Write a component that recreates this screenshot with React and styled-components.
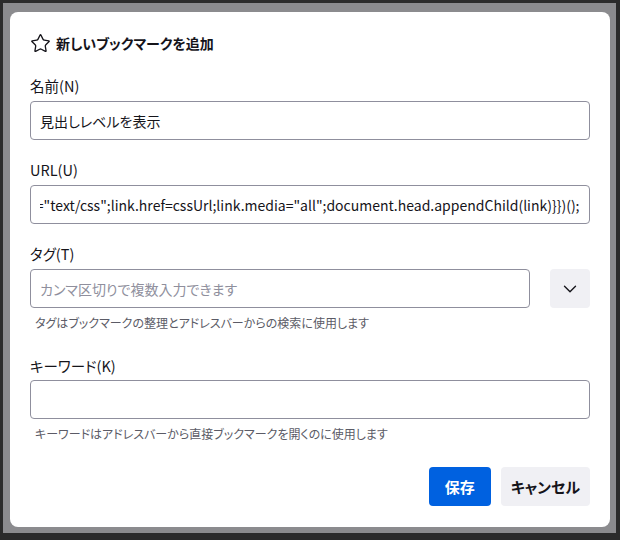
import React, { useLayoutEffect, useRef } from "react";
import styled, { createGlobalStyle } from "styled-components";
import { Star, ChevronDown } from "lucide-react";

const GlobalStyle = createGlobalStyle`
  html, body {
    margin: 0;
    padding: 0;
    background: #2b2b2b;
  }
  body {
    font-family: "Noto Sans CJK JP", "Noto Sans", sans-serif;
    font-feature-settings: "palt";
    color: #15141a;
  }
  input, button {
    font-feature-settings: "palt";
  }
`;

const Screen = styled.div`
  width: 620px;
  height: 540px;
  padding: 3px 4px 7px 3px;
  box-sizing: border-box;
`;

const Backdrop = styled.div`
  height: 100%;
  background: #8b8b8e;
  padding: 9px 6px 6px 7px;
  box-sizing: border-box;
`;

const Dialog = styled.div`
  height: 100%;
  background: #ffffff;
  border-radius: 8px;
  padding: 19px 20px 20px 20px;
  box-sizing: border-box;
  display: flex;
  flex-direction: column;
`;

const TitleRow = styled.div`
  display: flex;
  align-items: center;
  gap: 5px;
  height: 24px;
  font-size: 14px;
  font-weight: 700;
`;

const Field = styled.div`
  display: flex;
  flex-direction: column;
  margin-top: ${(p) => p.$top}px;
`;

const Label = styled.label`
  font-size: 14.5px;
  line-height: 20px;
  height: 20px;
  margin-bottom: ${(p) => p.$gap || 5}px;
`;

const TextInput = styled.input`
  height: 39px;
  box-sizing: border-box;
  border: 1px solid #8f8f9d;
  border-radius: 4px;
  padding: 0 9px;
  font-family: inherit;
  font-size: 14px;
  color: #15141a;
  background: #fff;
  width: 100%;
  outline: none;
  &::placeholder {
    color: #8f8f9d;
  }
`;

const Row = styled.div`
  display: flex;
  gap: 20px;
`;

const IconButton = styled.button`
  flex: 0 0 40px;
  height: 39px;
  border: none;
  border-radius: 4px;
  background: #f0f0f4;
  display: flex;
  align-items: center;
  justify-content: center;
  padding: 0;
  color: #15141a;
`;

const Help = styled.div`
  font-size: 12px;
  line-height: 20px;
  color: #5b5b66;
  margin-top: 5px;
  padding-left: 5px;
`;

const Footer = styled.div`
  display: flex;
  justify-content: flex-end;
  gap: 10px;
  margin-top: 23px;
`;

const Button = styled.button`
  height: 39px;
  min-width: 62px;
  border: none;
  border-radius: 4px;
  padding: 0 10px;
  font-family: inherit;
  font-size: 15px;
  font-weight: 700;
  background: ${(p) => (p.$primary ? "#0061e0" : "#f0f0f4")};
  color: ${(p) => (p.$primary ? "#ffffff" : "#15141a")};
`;

const URL_VALUE =
  'javascript:(function(){var cssUrl="https://example.com/style.css";if(!document.getElementById("hl")){var link=document.createElement("link");link.id="hl";link.rel="stylesheet";link.type="text/css";link.href=cssUrl;link.media="all";document.head.appendChild(link)}})();';

export default function App() {
  const urlRef = useRef(null);

  useLayoutEffect(() => {
    if (urlRef.current) urlRef.current.scrollLeft = urlRef.current.scrollWidth;
  }, []);

  return (
    <Screen>
      <GlobalStyle />
      <Backdrop>
        <Dialog>
          <TitleRow>
            <Star size={21} strokeWidth={1.5} />
            新しいブックマークを追加
          </TitleRow>

          <Field $top={21}>
            <Label>名前(N)</Label>
            <TextInput defaultValue="見出しレベルを表示" />
          </Field>

          <Field $top={20}>
            <Label>URL(U)</Label>
            <TextInput ref={urlRef} defaultValue={URL_VALUE} />
          </Field>

          <Field $top={20}>
            <Label>タグ(T)</Label>
            <Row>
              <TextInput placeholder="カンマ区切りで複数入力できます" />
              <IconButton>
                <ChevronDown size={22} strokeWidth={1.5} />
              </IconButton>
            </Row>
            <Help>タグはブックマークの整理とアドレスバーからの検索に使用します</Help>
          </Field>

          <Field $top={23}>
            <Label $gap={4}>キーワード(K)</Label>
            <TextInput />
            <Help>キーワードはアドレスバーから直接ブックマークを開くのに使用します</Help>
          </Field>

          <Footer>
            <Button $primary>保存</Button>
            <Button>キャンセル</Button>
          </Footer>
        </Dialog>
      </Backdrop>
    </Screen>
  );
}
